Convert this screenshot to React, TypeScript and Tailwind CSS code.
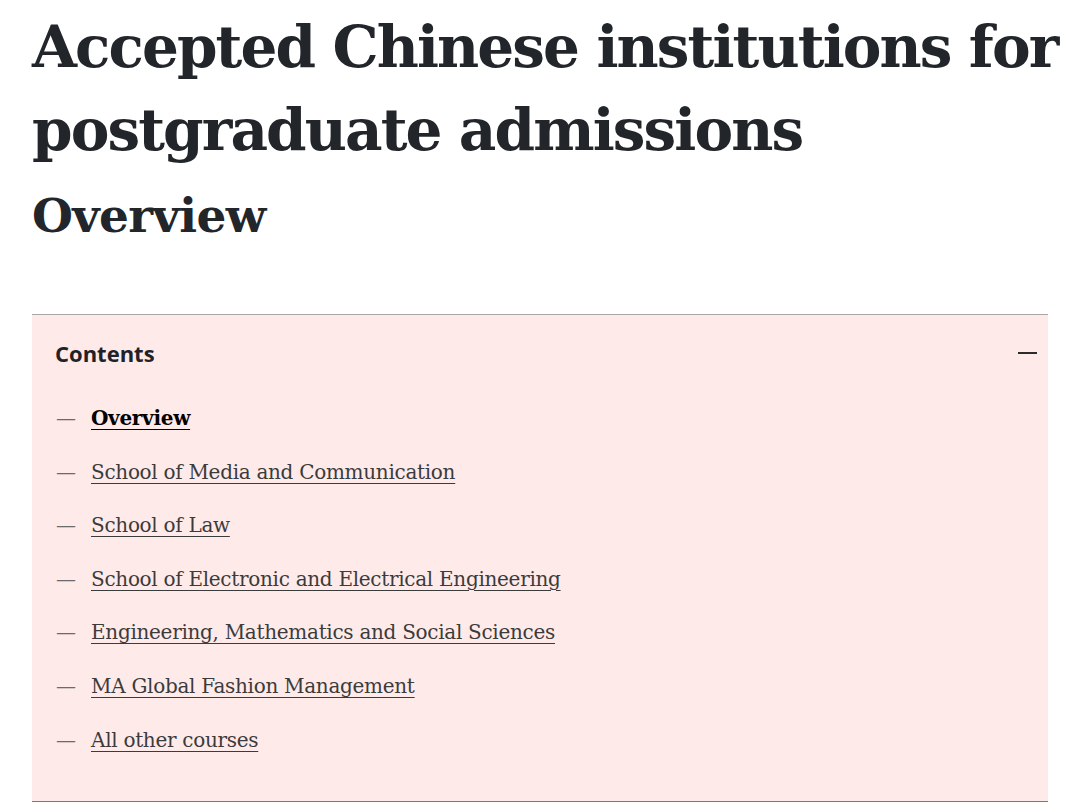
const items = [
  "Overview",
  "School of Media and Communication",
  "School of Law",
  "School of Electronic and Electrical Engineering",
  "Engineering, Mathematics and Social Sciences",
  "MA Global Fashion Management",
  "All other courses",
];

export default function App() {
  return (
    <div className="min-h-screen bg-white pl-8 text-[#22262b]">
      <h1 className="w-[1040px] pt-[6px] font-['DejaVu_Serif',serif] text-[58px] font-bold leading-[83px] tracking-[-1.9px]">
        Accepted Chinese institutions for postgraduate admissions
      </h1>
      <h2 className="mt-[13px] font-['DejaVu_Serif',serif] text-[47px] font-bold leading-[62px] tracking-[-0.6px]">
        Overview
      </h2>

      <div className="mt-[67px] w-[1016px] border-t border-b border-t-[#aaa6a6] border-b-[#777777] bg-[#ffeaea] pb-[46px]">
        <div className="flex items-center justify-between pl-[23px] pr-[11px] pt-[23px]">
          <span className="font-['Open_Sans',sans-serif] text-[22px] font-bold leading-[30px] text-[#1f2227]">
            Contents
          </span>
          <span className="block h-[2px] w-[19px] bg-[#2b2b2b]" />
        </div>
        <ul className="mt-[36px] flex flex-col gap-[24.6px] pl-[24px] font-['DejaVu_Serif',serif] text-[20px] leading-[29px] tracking-[-0.3px]">
          {items.map((item, i) => (
            <li key={item} className="flex items-center">
              <span className="w-[35px] text-[#6b6b6b]">—</span>
              <a
                href="#"
                className={`underline decoration-1 underline-offset-4 ${
                  i === 0 ? "font-bold text-black" : "text-[#3b3b3b]"
                }`}
              >
                {item}
              </a>
            </li>
          ))}
        </ul>
      </div>
    </div>
  );
}
